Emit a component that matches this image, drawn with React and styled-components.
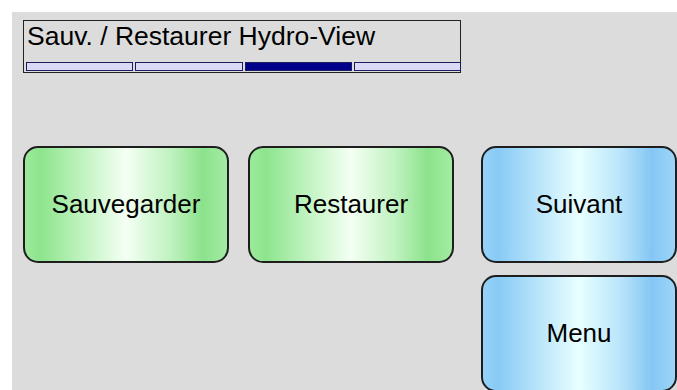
import React from "react";
import styled, { createGlobalStyle } from "styled-components";

const GlobalStyle = createGlobalStyle`
  html, body {
    margin: 0;
    padding: 0;
    background: #ffffff;
  }
  body {
    font-family: "Liberation Sans", Arial, sans-serif;
  }
`;

const Screen = styled.div`
  width: 677px;
  height: 390px;
  padding: 12px 0 0 12px;
  box-sizing: border-box;
  overflow: hidden;
`;

const Panel = styled.div`
  width: 665px;
  height: 378px;
  background: #dcdcdc;
  padding: 8px 0 0 11px;
  box-sizing: border-box;
  overflow: hidden;
`;

const TitleBox = styled.div`
  width: 438px;
  height: 53px;
  box-sizing: border-box;
  border: 1px solid #222;
  display: flex;
  flex-direction: column;
  justify-content: space-between;
  padding: 0 0 1px 2px;
`;

const Title = styled.div`
  font-size: 26.5px;
  line-height: 30px;
  color: #000;
  padding-left: 1px;
`;

const Progress = styled.div`
  display: flex;
  gap: 2px;
  height: 9px;
  margin-right: -1px;
`;

const Segment = styled.div`
  flex: 1;
  box-sizing: border-box;
  border: 1px solid #1c1c5e;
  background: ${(p) => (p.$active ? "#00008a" : "#dadaf6")};
`;

const Buttons = styled.div`
  display: flex;
  margin-top: 73px;
`;

const Pair = styled.div`
  display: flex;
  gap: 19px;
`;

const Side = styled.div`
  display: flex;
  flex-direction: column;
  gap: 12px;
  margin-left: 27px;
`;

const green =
  "linear-gradient(90deg, #9aea9a 0%, #8ee48e 8%, #c4f4c4 30%, #f4fff4 50%, #c0f2c0 72%, #8ce28c 88%, #a2eca2 100%)";
const blue =
  "linear-gradient(90deg, #96d2f8 0%, #88caf6 8%, #bce6fb 30%, #e8ffff 50%, #b8e4fa 72%, #84c6f4 88%, #9cd6f8 100%)";

const Button = styled.button`
  width: ${(p) => p.$w}px;
  height: 117px;
  box-sizing: border-box;
  border: 2px solid #1e1e1e;
  border-radius: 15px;
  background: ${(p) => (p.$tone === "blue" ? blue : green)};
  font-family: "Liberation Sans", Arial, sans-serif;
  font-size: 26px;
  color: #000;
  padding: 0;
  display: flex;
  align-items: center;
  justify-content: center;
  flex-shrink: 0;
`;

const steps = [false, false, true, false];

export default function App() {
  return (
    <>
      <GlobalStyle />
      <Screen>
        <Panel>
          <TitleBox>
            <Title>Sauv. / Restaurer Hydro-View</Title>
            <Progress>
              {steps.map((a, i) => (
                <Segment key={i} $active={a} />
              ))}
            </Progress>
          </TitleBox>
          <Buttons>
            <Pair>
              <Button $w={206}>Sauvegarder</Button>
              <Button $w={206}>Restaurer</Button>
            </Pair>
            <Side>
              <Button $w={196} $tone="blue">Suivant</Button>
              <Button $w={196} $tone="blue">Menu</Button>
            </Side>
          </Buttons>
        </Panel>
      </Screen>
    </>
  );
}
